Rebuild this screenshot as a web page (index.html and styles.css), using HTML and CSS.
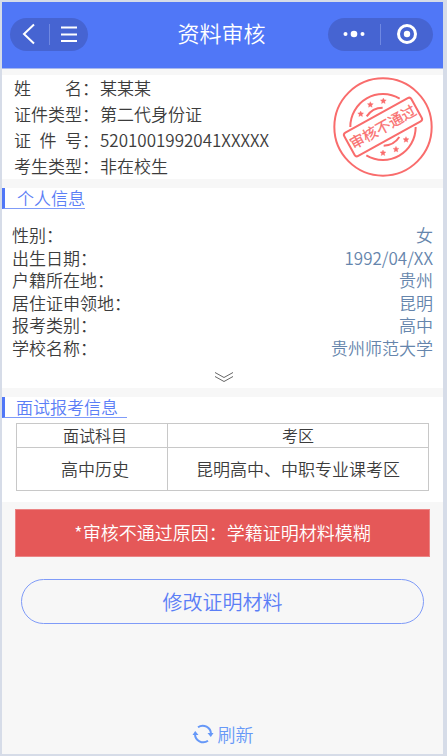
FILE: index.html
```html
<!DOCTYPE html>
<html lang="zh-CN">
<head>
<meta charset="utf-8">
<meta name="viewport" content="width=device-width, initial-scale=1">
<title>资料审核</title>
<link rel="stylesheet" href="styles.css">
</head>
<body>
<div class="page">
  <header class="topbar">
    <div class="capsule capsule-left">
      <button type="button" aria-label="返回"><svg width="14" height="22" viewBox="0 0 14 22"><path d="M12 1.500L2 11l10 9.500"/></svg></button>
      <span class="divider"></span>
      <button type="button" aria-label="菜单"><svg width="18" height="18" viewBox="0 0 18 18"><path d="M1 2.500h16M1 9.500h16M1 16h16"/></svg></button>
    </div>
    <h1>资料审核</h1>
    <div class="capsule capsule-right">
      <button type="button" aria-label="更多"><svg width="22" height="8" viewBox="0 0 22 8"><g class="solid"><circle cx="2.500" cy="4" r="2"/><circle cx="11" cy="4" r="3.300"/><circle cx="19.500" cy="4" r="2"/></g></svg></button>
      <span class="divider"></span>
      <button type="button" aria-label="关闭"><svg width="20" height="20" viewBox="0 0 20 20"><circle class="ring" cx="10" cy="10" r="8.500"/><circle class="solid" cx="10" cy="10" r="3.200"/></svg></button>
    </div>
  </header>

  <main>
    <section class="card identity">
      <dl class="id-list">
        <div><dt><span class="spread"><span>姓</span><span>名</span></span>：</dt><dd>某某某</dd></div>
        <div><dt>证件类型：</dt><dd>第二代身份证</dd></div>
        <div><dt><span class="spread"><span>证</span><span>件</span><span>号</span></span>：</dt><dd>5201001992041XXXXX</dd></div>
        <div><dt>考生类型：</dt><dd>非在校生</dd></div>
      </dl>
      <svg class="stamp" viewBox="38 18 300 300" role="img" aria-label="审核不通过">
        <defs><path id="star" d="M0-9L2.600-3.500 8.800-2.800 4.200 1.500 5.400 7.800 0 4.700-5.400 7.800-4.200 1.500-8.800-2.800-2.600-3.500z"/></defs>
        <g class="stamp-line">
          <circle cx="188" cy="168" r="146"/>
          <path d="M90 168A98 98 0 0 1 238 83"/>
          <path d="M286 168A98 98 0 0 1 138 253"/>
          <path d="M139 136A58 58 0 0 1 187 110"/>
          <path d="M190 224A58 58 0 0 0 237 198"/>
          <rect x="73" y="128" width="230" height="80" rx="8" transform="rotate(-29 188 168)"/>
        </g>
        <g class="stamp-fill">
          <use href="#star" x="121" y="129"/><use href="#star" x="150" y="101"/><use href="#star" x="189" y="90"/>
          <use href="#star" x="188" y="246"/><use href="#star" x="227" y="235"/><use href="#star" x="257" y="206"/>
          <text x="188" y="184" transform="rotate(-29 188 168)">审核不通过</text>
        </g>
      </svg>
    </section>

    <section class="card personal">
      <h2>个人信息</h2>
      <dl class="details">
        <div><dt>性别：</dt><dd>女</dd></div>
        <div><dt>出生日期：</dt><dd>1992/04/XX</dd></div>
        <div><dt>户籍所在地：</dt><dd>贵州</dd></div>
        <div><dt>居住证申领地：</dt><dd>昆明</dd></div>
        <div><dt>报考类别：</dt><dd>高中</dd></div>
        <div><dt>学校名称：</dt><dd>贵州师范大学</dd></div>
      </dl>
      <button class="expand" type="button" aria-label="展开"><svg width="20" height="12" viewBox="0 0 20 12"><path d="M1 1.500L10 6.500 19 1.500M1 5.500L10 10.500 19 5.500"/></svg></button>
    </section>

    <section class="card exam">
      <h2>面试报考信息</h2>
      <table>
        <thead><tr><th scope="col" class="subject">面试科目</th><th scope="col">考区</th></tr></thead>
        <tbody><tr><td class="subject">高中历史</td><td>昆明高中、中职专业课考区</td></tr></tbody>
      </table>
    </section>

    <p class="reason">*审核不通过原因：学籍证明材料模糊</p>
    <button class="edit" type="button">修改证明材料</button>
  </main>

  <button class="refresh" type="button">
    <svg width="22" height="20" viewBox="0 0 22 20"><path d="M6 3.200A8.300 8.300 0 0 1 19 10M16 16.800A8.300 8.300 0 0 1 3 10"/><path class="tip" d="M15.500 9h6L18.800 13zM.5 11h6L3.200 7z"/></svg>
    刷新
  </button>
</div>
</body>
</html>
```
FILE: styles.css
```css
* { box-sizing: border-box; }

body {
  margin: 0;
  font-family: "Noto Sans CJK SC", "Noto Sans", sans-serif;
  font-size: 17px;
  font-weight: 350;
  color: #3c3c3c;
}

h1, h2, p, dl, dd { margin: 0; font-weight: inherit; }

button {
  padding: 0;
  border: 0;
  background: none;
  font: inherit;
  color: inherit;
  cursor: pointer;
}

svg { display: block; fill: none; }

.page {
  display: flex;
  flex-direction: column;
  min-height: 100vh;
  border: 2px solid #d6dce8;
  border-right-width: 4px;
  background: #f7f7f7;
}

.topbar {
  display: grid;
  grid-template-columns: 1fr auto 1fr;
  align-items: center;
  height: 67px;
  padding: 0 10px 2px 8px;
  border-bottom: 1px solid #a8b8ee;
  background: #5077f7;
  color: #fff;
}

.topbar h1 { padding-bottom: 4px; font-size: 22px; line-height: 32px; }

.capsule {
  display: flex;
  align-items: center;
  height: 33px;
  border-radius: 17px;
  background: #4664d2;
}

.capsule button {
  flex: 1;
  display: flex;
  justify-content: center;
}

.capsule svg { stroke: #fff; stroke-width: 2; }
.capsule .solid { fill: #fff; stroke: none; }
.capsule .ring { stroke-width: 3; }
.capsule-left { width: 78px; }
.capsule-right { width: 105px; justify-self: end; }
.divider { width: 1px; height: 21px; background: #6f88e2; }

.card { background: #fff; }

.identity {
  display: flex;
  justify-content: space-between;
  align-items: center;
  margin-top: 6px;
  padding: 0 10px 0 12px;
}

.id-list { line-height: 26px; }
.id-list div { display: flex; }
.id-list dt { display: flex; width: 86px; }
.spread { display: flex; justify-content: space-between; width: 68px; }

.stamp { width: 100px; height: 100px; flex: none; }
.stamp-line { stroke: #f96c6c; stroke-width: 6; }
.stamp-fill { fill: #f96c6c; stroke: #f96c6c; stroke-width: 1; }
.stamp text { font-size: 44px; text-anchor: middle; }

.personal { margin-top: 9px; }

h2 {
  width: fit-content;
  padding: 0 0 0 12px;
  border-left: 3px solid #5077f7;
  border-bottom: 1px solid #7f9bf8;
  font-size: 17px;
  line-height: 20px;
  color: #5b7ef6;
}

.details {
  display: grid;
  grid-auto-rows: 1fr;
  height: 135px;
  margin: 15px 10px 0;
  line-height: 22px;
}

.details div { display: flex; justify-content: space-between; }
.details dd { color: #6585ac; }

.expand {
  display: block;
  width: 40px;
  margin: 0 auto;
  padding: 12px 9px 5px 11px;
}

.expand svg { stroke: #666; stroke-width: 1; }

.exam {
  margin-top: 9px;
  padding-bottom: 11px;
}

.exam h2 { padding: 0 9px 0 11px; }

table {
  width: calc(100% - 28px);
  margin: 5px 14px 0;
  border-collapse: collapse;
  table-layout: fixed;
  text-align: center;
}

th, td {
  height: 43px;
  padding: 0;
  border: 1px solid #c8c8c8;
  line-height: 22px;
}

th { height: 24px; padding-bottom: 1px; font-size: 16px; font-weight: inherit; }
.subject { width: 151px; padding-left: 6px; }

.reason {
  margin: 7px 13px 0;
  padding-bottom: 2px;
  border: 1px solid #eb8585;
  background: #e55858;
  color: #fff;
  font-size: 18px;
  line-height: 44px;
  text-align: center;
}

.edit {
  display: block;
  width: calc(100% - 38px);
  height: 45px;
  margin: 22px auto 0;
  border: 1px solid #7f9bf8;
  border-radius: 23px;
  color: #5b7ef6;
  font-size: 20px;
}

.refresh {
  display: flex;
  align-items: center;
  align-self: center;
  gap: 4px;
  margin-top: auto;
  padding-bottom: 6px;
  color: #6698f8;
  font-size: 18px;
  line-height: 28px;
}

.refresh svg { stroke: #6698f8; stroke-width: 2; }
.refresh .tip { fill: #6698f8; stroke: none; }
```
